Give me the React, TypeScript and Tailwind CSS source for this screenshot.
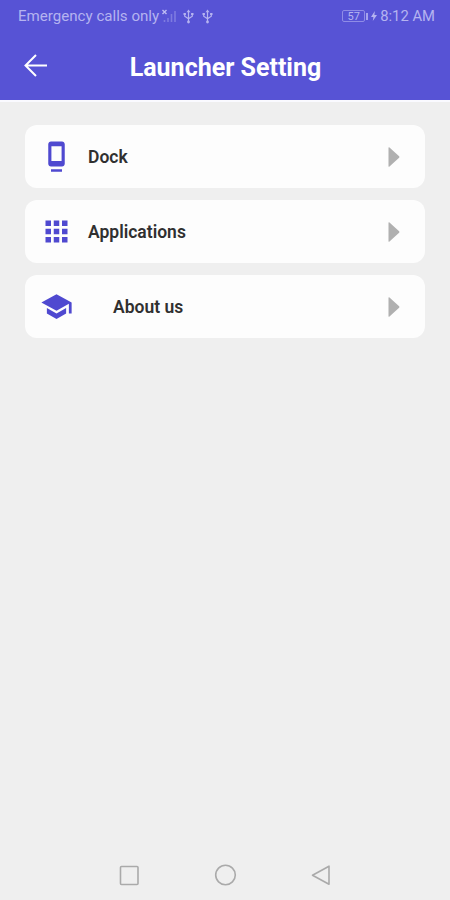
import type { ReactNode } from 'react';
import { MdApps, MdSchool } from 'react-icons/md';

type Item = {
  label: string;
  icon: ReactNode;
  labelClass: string;
};

function DockIcon() {
  return (
    <svg width="33" height="33" viewBox="0 0 24 24" fill="currentColor">
      <path d="M8 23h8v-1.8H8zM16 1H8c-1.1 0-2 .9-2 2v14.2c0 1.1.9 2 2 2h8c1.1 0 2-.9 2-2V3c0-1.1-.9-2-2-2zm-.3 14.3H8.3V4.6h7.4z" />
    </svg>
  );
}

const ITEMS: Item[] = [
  { label: 'Dock', icon: <DockIcon />, labelClass: 'ml-[15px]' },
  { label: 'Applications', icon: <MdApps size={33} />, labelClass: 'ml-[15px]' },
  { label: 'About us', icon: <MdSchool size={33} />, labelClass: 'ml-10' },
];

function UsbIcon() {
  return (
    <svg width="11" height="15" viewBox="0 0 11 15" fill="none" stroke="currentColor" strokeWidth="1.2">
      <path d="M5.5 2v11M1.7 5v2.2l3.8 2.6 3.8-2.6V5" />
      <path d="M3.5 3.2 5.5.5l2 2.7z" fill="currentColor" stroke="none" />
      <circle cx="5.5" cy="13" r="1.4" fill="currentColor" stroke="none" />
      <path d="M.5 4h2.4v2H.5zM8.1 4h2.4v2H8.1z" fill="currentColor" stroke="none" />
    </svg>
  );
}

function StatusBar() {
  return (
    <div className="flex h-8 items-center justify-between pl-[18px] pr-[15px] text-[15px] leading-8 text-[#b5b3f0]">
      <div className="flex items-center">
        <span className="w-[143px] whitespace-nowrap text-[15.1px]">Emergency calls only</span>
        <svg className="mr-[5px]" width="17" height="14" viewBox="0 0 17 14" fill="none">
          <path d="m1.5 1 4 4M5.5 1l-4 4" stroke="#bdbbf3" strokeWidth="1.4" />
          <path d="M3.5 13v-2M7 13V9M10.5 13V5M14 13V2" stroke="#7e7be0" strokeWidth="1.6" />
        </svg>
        <UsbIcon />
        <span className="w-2" />
        <UsbIcon />
      </div>
      <div className="flex items-center">
        {/* Battery level */}
        <div className="flex h-3 w-[23px] items-center justify-center rounded-[2px] border border-[#8f8ce6] text-[11px] leading-none">
          57
        </div>
        <span className="ml-px h-[7px] w-[2px] bg-[#a5a3ec]" />
        <svg className="mx-[3px]" width="6" height="12" viewBox="0 0 6 12" fill="currentColor">
          <path d="M3.8 1 0 7h2.4l-.6 4L6 5H3.4z" />
        </svg>
        <span className="whitespace-nowrap text-[14.8px]">8:12 AM</span>
      </div>
    </div>
  );
}

function SettingRow({ label, icon, labelClass }: Item) {
  return (
    <button className="flex h-[63px] w-full items-center rounded-xl bg-[#fdfdfd] pl-[15px] pr-[25px] text-left">
      <span className="text-[#4f49d0]">{icon}</span>
      <span className={`flex-1 pt-[2px] text-[17.5px] font-semibold text-[#303030] ${labelClass}`}>{label}</span>
      <svg width="12" height="20" viewBox="0 0 12 20" fill="#b0b0b0">
        <path d="M.5.8C.5.1 1 0 1.5.5l9.6 8.7c.5.5.5 1.1 0 1.6l-9.6 8.7c-.5.5-1 .4-1-.3z" />
      </svg>
    </button>
  );
}

export default function App() {
  return (
    <div className="flex h-[900px] w-[450px] flex-col overflow-hidden bg-[#efefef] font-['Roboto',sans-serif]">
      <header className="h-[102px] border-b-2 border-[#fafaff] bg-[#5753d5]">
        <StatusBar />
        <div className="grid h-[68px] grid-cols-[72px_1fr_72px] items-center">
          <button className="pl-6 text-white" aria-label="Back">
            <svg width="24" height="24" viewBox="0 0 24 24" fill="none" stroke="currentColor" strokeWidth="2">
              <path d="M23 11.5H2M12 1 1.5 11.5 12 22" />
            </svg>
          </button>
          <h1 className="whitespace-nowrap pl-px pt-[3px] text-center text-[25px] font-bold text-white">Launcher Setting</h1>
        </div>
      </header>

      <main className="flex flex-1 flex-col gap-3 px-[25px] pt-[23px]">
        {ITEMS.map((item) => (
          <SettingRow key={item.label} {...item} />
        ))}
      </main>

      {/* System navigation */}
      <nav className="flex h-[50px] items-center pl-[119px] text-[#aaaaaa]">
        <svg width="212" height="24" viewBox="0 0 212 24" fill="none" stroke="currentColor" strokeWidth="1.6">
          <rect x="1.5" y="3.5" width="17.5" height="18" rx="1" />
          <circle cx="106.5" cy="12" r="9.8" />
          <path d="M210 3.2v18L193.5 12.2z" strokeLinejoin="round" />
        </svg>
      </nav>
    </div>
  );
}
